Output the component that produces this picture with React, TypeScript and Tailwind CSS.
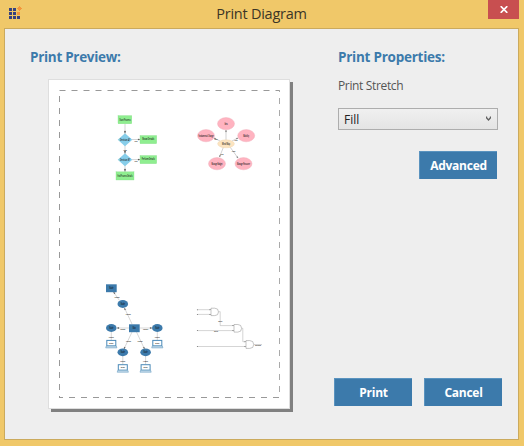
import type { ReactNode } from "react";

const BLUE = "#3c7aab";

function AppIcon() {
  return (
    <svg width="14" height="14" viewBox="9 6 14 14" shapeRendering="crispEdges">
      <path d="M9 8h3v3H9zM13 8h3v3h-3zM9 12h3v3H9zM13 12h3v3h-3zM9 16h3v3H9zM13 16h3v3h-3zM17 16h3v3h-3z" fill="#37427f" />
      <path d="M17 12h3v3h-3z" fill="#f3973c" />
      <path d="M19 6h1v1h1v1h1v1h-1v1h-1v1h-1v-1h-1V9h-1V8h1V7h1z" fill="#f3973c" />
    </svg>
  );
}

function Label({ x, y, children, size = 2.5, w }: { x: number; y: number; children: string; size?: number; w?: number }) {
  return (
    <text x={x} y={y + 0.8} fontSize={size} textAnchor="middle" textLength={w} lengthAdjust="spacingAndGlyphs" fill="#111" fontWeight="600" fontFamily="Open Sans, sans-serif">
      {children}
    </text>
  );
}

function FlowChart() {
  return (
    <g>
      <path d="M125 124v48M132 139.500h8M132 159.600h8" stroke="#aaa" strokeWidth="0.5" fill="none" />
      <path d="M124.400 131l.6 2.200.6-2.200zM124.400 151l.6 2.400.6-2.400zM124.400 169l.6 2.400.6-2.400zM138.200 138.900l1.600.6-1.600.6zM138.200 159l1.600.6-1.600.6z" fill="#444" stroke="#444" strokeWidth="0.3" />
      <g fill="#8fee90" stroke="#83d985" strokeWidth="0.3">
        <rect x="118" y="115.600" width="13.800" height="8.200" />
        <rect x="140" y="135.500" width="16.700" height="8.200" />
        <rect x="140" y="155.500" width="16.700" height="8.200" />
        <rect x="116" y="171.800" width="18" height="8.200" />
      </g>
      <g fill="#87cde9">
        <path d="M125 133.200l7.300 6.500-7.300 6.500-7.300-6.500z" />
        <path d="M125 153.200l7.300 6.500-7.300 6.500-7.300-6.500z" />
      </g>
      <Label x={125} y={119.900} w={11}>Start Process</Label>
      <Label x={125} y={139.800} w={10}>Decision A?</Label>
      <Label x={148.300} y={139.500} w={12}>Show Details</Label>
      <Label x={125} y={159.800} w={10}>Decision B?</Label>
      <Label x={148.300} y={159.500} w={13}>Perform Details</Label>
      <Label x={125} y={176} w={15}>End Process Details</Label>
      <Label x={136} y={141.100} size={2}>No</Label>
      <Label x={136} y={161.100} size={2}>No</Label>
      <Label x={125} y={150.500} size={2}>Yes</Label>
    </g>
  );
}

function MindMap() {
  return (
    <g>
      <path d="M226 140v-10M220 141l-6-3M232 141l6-3M223.500 147l-4 10M230 147l8 11" stroke="#b4b4b4" strokeWidth="0.600" fill="none" />
      <path d="M225.400 131.800l.6-1.800.6 1.800zM214 138l1.800.2-.6 1zM238 138l-1.800.2.6 1zM219.500 157l.1-1.800 1.200.5zM238 158l-1.500-.9 1-.7z" fill="#666" stroke="#666" strokeWidth="0.200" />
      <g fill="#ffb3c0" stroke="#eeaab6" strokeWidth="0.400">
        <ellipse cx="226" cy="123.700" rx="8.500" ry="6.100" />
        <ellipse cx="206" cy="135.700" rx="8.500" ry="6.100" />
        <ellipse cx="246.200" cy="135.700" rx="8.500" ry="6.100" />
        <ellipse cx="217" cy="163.700" rx="8.500" ry="6.100" />
        <ellipse cx="243.500" cy="163.700" rx="8.500" ry="6.100" />
      </g>
      <ellipse cx="226" cy="143.800" rx="8.400" ry="4" fill="#fce4c0" stroke="#eed4ad" strokeWidth="0.400" />
      <Label x={226} y={124} w={3}>Idea</Label>
      <Label x={206} y={136} w={15}>Fundamental Change</Label>
      <Label x={246.200} y={136} w={6}>Mobility</Label>
      <Label x={226} y={144} w={8}>Mind Map</Label>
      <Label x={217} y={164} w={11}>Manage Budget</Label>
      <Label x={243.500} y={164} w={13}>Manage Resource</Label>
      <Label x={216} y={139.500} size={2}>No</Label>
      <Label x={236} y={140.500} size={2}>No</Label>
      <Label x={222} y={154} size={2}>No</Label>
      <Label x={233.500} y={151.500} size={2}>Yes</Label>
    </g>
  );
}

const laptops = [
  [111.3, 340.4],
  [157.3, 340.4],
  [122.8, 364.7],
  [145.6, 364.7],
];

function Network() {
  return (
    <g>
      <path d="M113.500 292l6 8.500M124.500 308l7.500 16M129 328h-12M140 328h12M132 332l-8 17M136.500 332l8 17M111.300 332v8M157.300 332v8M122.800 356v8.500M145.600 356v8.500" stroke="#b0b0b0" strokeWidth="0.500" fill="none" />
      <path d="M113.500 292l1.800 1.100-1.200.8zM124.500 308l1.300 1.500-1.200.5zM117 328l2-.7v1.400zM152 328l-2-.7v1.400zM124 349l.2-2 1.200.5zM144.500 349l-1.400-1.400 1.200-.5z" fill="#555" stroke="#555" strokeWidth="0.200" />
      <g fill={BLUE}>
        <rect x="106" y="284.300" width="10.700" height="7.900" />
        <rect x="129" y="324.300" width="10.700" height="7.900" />
        <ellipse cx="122.800" cy="304" rx="5.300" ry="3.900" />
        <ellipse cx="111.300" cy="328" rx="5.300" ry="3.900" />
        <ellipse cx="157.300" cy="328" rx="5.300" ry="3.900" />
        <ellipse cx="122.800" cy="352.300" rx="5.300" ry="3.900" />
        <ellipse cx="145.600" cy="352.300" rx="5.300" ry="3.900" />
      </g>
      {laptops.map(([x, y]) => (
        <g key={`${x}-${y}`}>
          <rect x={x - 4.5} y={y} width="9" height="5.5" fill="#fff" stroke="#4b8ab8" strokeWidth="1" />
          <path d={`M${x - 5} ${y + 5.6}h10l.6 1.900h-11.200z`} fill="#c5dbea" stroke="#6a9fc5" strokeWidth="0.600" />
          <Label x={x} y={y + 2.8} size={2}>Disk</Label>
          <Label x={x} y={y - 3.4} size={2} w={5}>Label</Label>
        </g>
      ))}
      <Label x={111.300} y={288.300} w={4}>Node</Label>
      <Label x={122.800} y={304.100} w={4}>Node</Label>
      <Label x={134.300} y={328.300} w={3}>Main</Label>
      <Label x={111.300} y={328.100} w={4}>Node</Label>
      <Label x={157.300} y={328.100} w={4}>Node</Label>
      <Label x={122.800} y={352.500} w={4}>Node</Label>
      <Label x={145.600} y={352.500} w={4}>Node</Label>
      <Label x={117} y={297.300} size={2}>Label</Label>
      <Label x={128.300} y={314.500} size={2}>Label</Label>
      <Label x={122.800} y={329.200} size={2}>Label</Label>
      <Label x={145.600} y={329.200} size={2}>Label</Label>
      <Label x={128.500} y={341.500} size={2}>Label</Label>
      <Label x={140} y={341.500} size={2}>Label</Label>
    </g>
  );
}

function LogicCircuit() {
  return (
    <g fill="none" stroke="#aaa" strokeWidth="0.500">
      <path d="M197.500 309.700H211M197.500 314.400H211M218.500 311.700h1.700v13.900H234M197.500 330.600H234M241.800 328.300h1v13.400h3M197.500 346.500H246M253.700 344.500H262" />
      <g fill="#fff" stroke="#8a8a8a">
        <path d="M211 308.200h3.800a3.700 3.700 0 0 1 0 7.400H211z" />
        <path d="M234 324.500h3.800a3.800 3.800 0 0 1 0 7.600H234z" />
        <path d="M246 340.600h3.800a3.900 3.900 0 0 1 0 7.800H246z" />
      </g>
      <g fill="#666" stroke="none">
        <path d="M209.500 309.200l1.500.5-1.500.5zM209.500 313.900l1.500.5-1.500.5zM232.500 325.100l1.500.5-1.500.5zM232.500 330.100l1.500.5-1.500.5zM244.500 341.200l1.500.5-1.500.5zM244.500 346l1.500.5-1.500.5z" />
        <circle cx="197.400" cy="309.700" r="0.500" />
        <circle cx="197.400" cy="314.400" r="0.500" />
        <circle cx="197.400" cy="330.600" r="0.500" />
        <circle cx="197.400" cy="346.500" r="0.500" />
      </g>
      <g stroke="none">
        <Label x={220.200} y={320.700} size={1.8}>Wire</Label>
        <Label x={216} y={331.500} size={1.8}>Wire</Label>
        <Label x={258} y={345} size={2} w={6}>Output</Label>
      </g>
    </g>
  );
}

function PagePreview() {
  return (
    <div className="ml-[43px] mt-2.5 h-[330px] w-[242px] border border-[#dedede] bg-white shadow-[3px_3px_0_0_#808080]">
      <svg width="240" height="328" viewBox="49 80 240 328" className="block">
        <path d="M59.500 90.500H280" stroke="#999" strokeDasharray="6 6" fill="none" />
        <path d="M59.500 397.500H280" stroke="#999" strokeDasharray="6 6" strokeDashoffset="2.500" fill="none" />
        <path d="M59.500 398V90" stroke="#999" strokeDasharray="6 6" strokeDashoffset="4" fill="none" />
        <path d="M279.500 90V397" stroke="#aaa" strokeDasharray="6 6" strokeDashoffset="4" fill="none" />
        <FlowChart />
        <MindMap />
        <Network />
        <LogicCircuit />
      </svg>
    </div>
  );
}

function Button({ children }: { children: ReactNode }) {
  return (
    <button className="h-7 w-[78px] border-l border-t border-[#5a93bf] bg-[#3c7aab] text-[12px] font-bold leading-[26px] tracking-[-0.25px] text-white">
      {children}
    </button>
  );
}

export default function App() {
  return (
    <div className="flex h-[446px] w-[524px] flex-col overflow-hidden bg-[#f0c869] font-['Open_Sans','Noto_Sans',sans-serif]">
      <header className="flex h-7 shrink-0 items-start pl-[9px] pr-[5px]">
        <div className="mt-1.5 w-[26px]">
          <AppIcon />
        </div>
        <h1 className="mt-1 flex-1 text-center text-[14.5px] leading-[20px] tracking-[-0.25px] text-[#3b3526]">Print Diagram</h1>
        <button className="flex h-[19px] w-[31px] items-center justify-center bg-[#c84f50]" aria-label="Close">
          <svg width="8" height="7" viewBox="0 0 8 7">
            <path d="M.7.200l6.600 6.600M7.300.200L.7 6.800" stroke="#fff" strokeWidth="1.700" fill="none" />
          </svg>
        </button>
      </header>
      <main className="ml-1 flex h-[412px] w-[515px] border border-[#cbaa5d] bg-[#eeeeee]">
        <section className="w-[329px] shrink-0 pt-[18px]">
          <h2 className="ml-[25px] h-[22px] text-[13.5px] font-bold leading-[20px] tracking-[-0.3px] text-[#3c7aab]">Print Preview:</h2>
          <PagePreview />
        </section>
        <section className="flex flex-1 flex-col pt-[18px]">
          <h2 className="ml-1 h-[21px] text-[13.5px] font-bold leading-[20px] tracking-[-0.25px] text-[#3c7aab]">Print Properties:</h2>
          <p className="ml-1 mt-[9px] h-5 text-[12px] leading-[18px] tracking-[-0.35px] text-[#555]">Print Stretch</p>
          <button className="ml-1 mt-[11px] flex h-[22px] w-40 items-center justify-between border border-[#adadad] bg-linear-to-b from-[#f0f0f0] to-[#e4e4e4] pl-[5px] pr-1.5 text-[12px] leading-5 text-[#222]">
            <span className="mt-px">Fill</span>
            <svg width="5" height="5" viewBox="0 0 5 5" className="-mt-px">
              <path d="M.5.500v1.300l2 2.200 2-2.200V.500" stroke="#606060" strokeWidth="1.300" fill="none" />
            </svg>
          </button>
          <div className="ml-[85px] mt-[21px] flex">
            <Button>Advanced</Button>
          </div>
          <div className="mb-[33px] mt-auto flex gap-3">
            <Button>Print</Button>
            <Button>Cancel</Button>
          </div>
        </section>
      </main>
    </div>
  );
}
